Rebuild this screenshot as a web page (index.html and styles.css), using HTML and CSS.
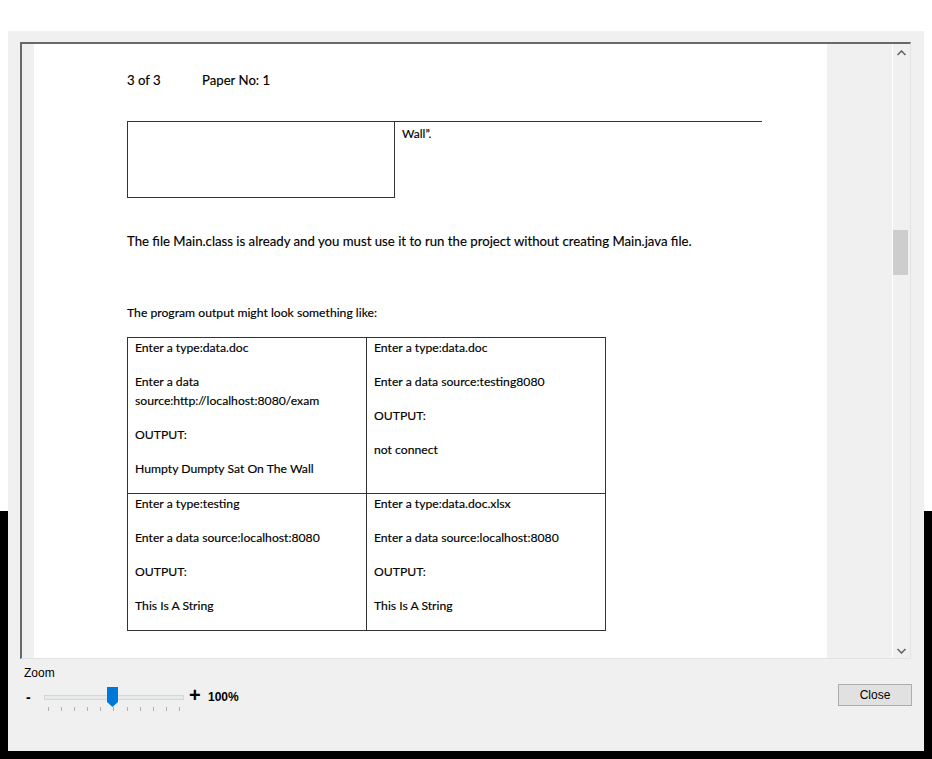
FILE: index.html
```html
<!DOCTYPE html>
<html>
<head>
<meta charset="utf-8">
<link rel="stylesheet" href="styles.css">
</head>
<body>
<div class="dialog">
  <div class="viewer">
    <div class="canvas">
      <div class="page">
        <div class="hdr"><span class="hdr-a">3 of 3</span><span>Paper No: 1</span></div>
        <div class="top-table">
          <div class="box"></div>
          <div class="rcell">Wall”.</div>
        </div>
        <p class="para p1">The file Main.class is already and you must use it to run the project without creating Main.java file.</p>
        <p class="para p2">The program output might look something like:</p>
        <table class="out">
          <tr>
            <td>
              <p>Enter a type:data.doc</p>
              <p>Enter a data<br>source:http://localhost:8080/exam</p>
              <p>OUTPUT:</p>
              <p>Humpty Dumpty Sat On The Wall</p>
            </td>
            <td>
              <p>Enter a type:data.doc</p>
              <p>Enter a data source:testing8080</p>
              <p>OUTPUT:</p>
              <p>not connect</p>
            </td>
          </tr>
          <tr>
            <td>
              <p>Enter a type:testing</p>
              <p>Enter a data source:localhost:8080</p>
              <p>OUTPUT:</p>
              <p>This Is A String</p>
            </td>
            <td>
              <p>Enter a type:data.doc.xlsx</p>
              <p>Enter a data source:localhost:8080</p>
              <p>OUTPUT:</p>
              <p>This Is A String</p>
            </td>
          </tr>
        </table>
      </div>
    </div>
    <div class="vscroll">
      <svg class="arr up" width="9" height="6" viewBox="0 0 9 6"><path d="M0.5 5 L4.5 1 L8.5 5" fill="none" stroke="#606060" stroke-width="1.5"/></svg>
      <div class="track"><div class="thumb"></div></div>
      <svg class="arr down" width="9" height="6" viewBox="0 0 9 6"><path d="M0.5 1 L4.5 5 L8.5 1" fill="none" stroke="#606060" stroke-width="1.5"/></svg>
    </div>
  </div>
  <div class="controls">
    <div class="zoom-box">
      <div class="zoom-label">Zoom</div>
      <div class="slider-row">
        <span class="minus">-</span>
        <div class="slider">
          <div class="sl-track"></div>
          <div class="ticks"><i></i><i></i><i></i><i></i><i></i><i></i><i></i><i></i><i></i><i></i><i></i></div>
          <svg class="sl-thumb" width="11" height="20" viewBox="0 0 11 20"><path d="M0 0 H11 V15 L5.5 20 L0 15 Z" fill="#0078d7"/></svg>
        </div>
        <span class="plus">+</span>
        <span class="pct">100%</span>
      </div>
    </div>
    <button class="close">Close</button>
  </div>
</div>
</body>
</html>
```

FILE: styles.css
```css
html, body {
  margin: 0;
  padding: 0;
}
body {
  width: 932px;
  height: 759px;
  overflow: hidden;
  background: linear-gradient(to bottom, #ffffff 0, #ffffff 511px, #000000 511px);
  padding-top: 31px;
  box-sizing: border-box;
}
.dialog {
  margin: 0 8px;
  width: 916px;
  height: 720px;
  background: #f0f0f0;
  padding: 11px 13px 0 12px;
  box-sizing: border-box;
  font-family: "Liberation Sans", Arial, sans-serif;
}
.viewer {
  height: 617px;
  display: flex;
  border-top: 2px solid #696969;
  border-left: 2px solid #696969;
  border-right: 1px solid #e3e3e3;
  border-bottom: 1px solid #e3e3e3;
  box-sizing: border-box;
  background: #f0f0f0;
}
.canvas {
  flex: 1;
  padding-left: 12px;
  overflow: hidden;
  display: flex;
}
.page {
  width: 793px;
  background: #fff;
  padding: 27px 0 0 93px;
  box-sizing: border-box;
  font-family: Lato, "Open Sans", sans-serif;
  font-size: 13.2px;
  color: #000;
  -webkit-text-stroke: 0.15px #000;
}
.hdr {
  line-height: 19px;
  display: flex;
}
.hdr-a {
  width: 75px;
}
.top-table {
  margin-top: 31px;
  display: flex;
}
.box {
  width: 268px;
  height: 77px;
  border: 1px solid #333;
  box-sizing: border-box;
}
.rcell {
  width: 367px;
  border-top: 1px solid #333;
  font-size: 12px;
  padding: 4px 0 0 7px;
  box-sizing: border-box;
  height: 77px;
}
.para {
  margin: 0;
  line-height: 19px;
}
.p1 {
  margin-top: 34px;
}
.p2 {
  margin-top: 52px;
  font-size: 12.2px;
}
.out {
  margin-top: 15px;
  border-collapse: collapse;
  width: 479px;
  font-size: 12.2px;
}
.out td {
  width: 239px;
  border: 1px solid #333;
  vertical-align: top;
  padding: 0 7px;
  box-sizing: border-box;
}
.out p {
  margin: 0 0 15px 0;
  line-height: 19px;
}
.vscroll {
  width: 17px;
  border-left: 1px solid #fff;
  display: flex;
  flex-direction: column;
  align-items: center;
  background: #f0f0f0;
}
.arr.up {
  margin: 6px 0;
}
.arr.down {
  margin: 6px 0 4px 0;
}
.track {
  flex: 1;
  width: 100%;
  padding-top: 168px;
}
.thumb {
  width: 15px;
  height: 45px;
  background: #cdcdcd;
}
.controls {
  display: flex;
  justify-content: space-between;
  padding-top: 7px;
}
.zoom-box {
  display: flex;
  flex-direction: column;
}
.zoom-label {
  font-size: 12px;
  line-height: 14px;
  margin-left: 4px;
  color: #000;
}
.slider-row {
  display: flex;
  align-items: flex-start;
  margin-top: 5px;
  height: 28px;
}
.minus {
  font-size: 14px;
  font-weight: bold;
  width: 24px;
  padding-left: 6px;
  line-height: 24px;
  box-sizing: border-box;
}
.slider {
  position: relative;
  width: 140px;
  height: 28px;
}
.sl-track {
  margin: 10px 0 0 0;
  height: 3px;
  background: #e7eaea;
  border: 1px solid #d6d6d6;
}
.ticks {
  display: flex;
  justify-content: space-between;
  margin: 7px 4px 0 4px;
}
.ticks i {
  display: block;
  width: 1px;
  height: 4px;
  background: #b0b0b0;
}
.sl-thumb {
  position: absolute;
  left: 63px;
  top: 2px;
}
.plus {
  font-size: 20px;
  font-weight: bold;
  line-height: 20px;
  margin-left: 5px;
  width: 19px;
}
.pct {
  font-size: 12px;
  font-weight: bold;
  line-height: 22px;
  margin-top: 1px;
}
.close {
  width: 74px;
  height: 22px;
  margin-top: 18px;
  margin-right: -1px;
  background: #e1e1e1;
  border: 1px solid #adadad;
  font-family: "Liberation Sans", Arial, sans-serif;
  font-size: 12px;
  color: #000;
  padding: 0;
}
```
